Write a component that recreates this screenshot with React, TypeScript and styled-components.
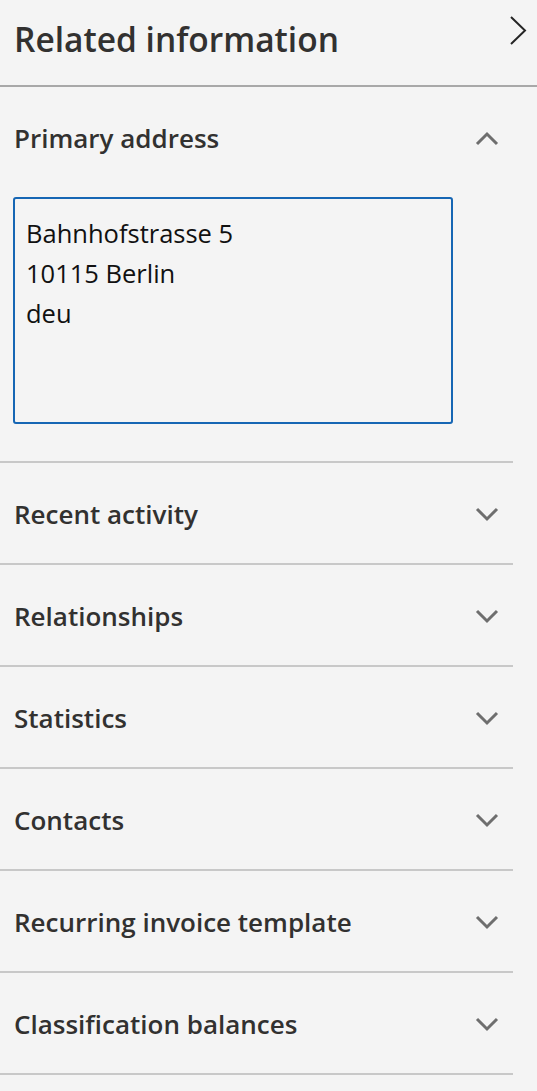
import React from "react";
import styled, { createGlobalStyle } from "styled-components";

const Global = createGlobalStyle`
  html, body { margin: 0; padding: 0; background: #f4f4f4; }
  body { font-family: "Open Sans", "Noto Sans", sans-serif; }
  * { box-sizing: border-box; }
`;

const Panel = styled.div`
  width: 537px;
  min-height: 1091px;
  background: #f4f4f4;
  color: #323130;
`;

const Header = styled.div`
  display: flex;
  align-items: center;
  justify-content: space-between;
  height: 87px;
  padding: 0 10px 7px 14px;
  border-bottom: 2px solid #a8a8a8;
`;

const Title = styled.h1`
  margin: 0;
  font-size: 33.5px;
  font-weight: 600;
  color: #323130;
`;

const IconButton = styled.button`
  border: 0;
  background: transparent;
  padding: 0;
  display: flex;
  align-self: flex-start;
  margin-top: 16px;
  cursor: pointer;
`;

const Section = styled.section`
  margin-right: 24px;
  border-bottom: 2px solid #c8c8c8;
`;

const SectionHeader = styled.div`
  display: flex;
  align-items: center;
  justify-content: space-between;
  height: 100px;
  padding: 2px 14px 0 14px;
`;

const SectionTitle = styled.h2`
  margin: 0;
  font-size: 26px;
  font-weight: 600;
  color: #323130;
`;

const Body = styled.div`
  padding: 10px 0 37px 13px;
`;

const AddressBox = styled.div`
  width: 440px;
  height: 227px;
  border: 2px solid #1666b4;
  border-radius: 3px;
  padding: 14px 11px 10px;
  font-size: 25.5px;
  line-height: 40px;
  color: #111;
  white-space: pre-line;
`;

const Chevron = ({ up }: { up?: boolean }) => (
  <svg width="24" height="16" viewBox="0 0 24 16">
    <path
      d={up ? "M2 14 L12 4 L22 14" : "M2 3 L12 13 L22 3"}
      fill="none"
      stroke="#6e6e6e"
      strokeWidth="3"
    />
  </svg>
);

const sections = [
  "Recent activity",
  "Relationships",
  "Statistics",
  "Contacts",
  "Recurring invoice template",
  "Classification balances",
];

export default function App() {
  return (
    <Panel>
      <Global />
      <Header>
        <Title>Related information</Title>
        <IconButton aria-label="Collapse">
          <svg width="18" height="30" viewBox="0 0 18 30">
            <path d="M2 1 L16 14.5 L2 28" fill="none" stroke="#252525" strokeWidth="2" />
          </svg>
        </IconButton>
      </Header>
      <Section>
        <SectionHeader>
          <SectionTitle>Primary address</SectionTitle>
          <Chevron up />
        </SectionHeader>
        <Body>
          <AddressBox>{"Bahnhofstrasse 5\n10115 Berlin\ndeu"}</AddressBox>
        </Body>
      </Section>
      {sections.map((s) => (
        <Section key={s}>
          <SectionHeader>
            <SectionTitle>{s}</SectionTitle>
            <Chevron />
          </SectionHeader>
        </Section>
      ))}
    </Panel>
  );
}
